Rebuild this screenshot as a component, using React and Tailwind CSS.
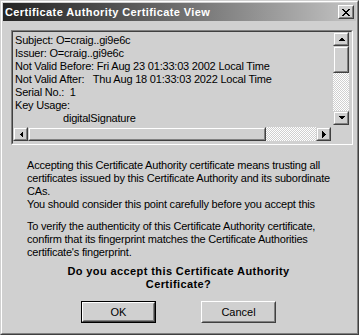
import React from "react";

const FONT = { fontFamily: '"Liberation Sans", Arial, sans-serif' };

function Raised({ className = "", children }) {
  return (
    <div className={`border border-t-[#d0d0d0] border-l-[#d0d0d0] border-b-[#404040] border-r-[#404040] ${className}`}>
      <div className="h-full w-full border border-t-white border-l-white border-b-[#808080] border-r-[#808080] bg-[#d0d0d0] flex items-center justify-center">
        {children}
      </div>
    </div>
  );
}

function Arrow({ dir }) {
  const pts = {
    up: "0,4 7,4 3.5,0.5",
    down: "0,0 7,0 3.5,3.5",
    left: "4,0 4,7 0.5,3.5",
    right: "0,0 0,7 3.5,3.5",
  }[dir];
  const vertical = dir === "up" || dir === "down";
  return (
    <svg width={vertical ? 7 : 4} height={vertical ? 4 : 7} viewBox={vertical ? "0 0 7 4" : "0 0 4 7"} shapeRendering="crispEdges">
      <polygon points={pts} fill="#000" />
    </svg>
  );
}

function CloseGlyph() {
  const rows = [
    "XX....XX",
    ".XX..XX.",
    "..XXXX..",
    "...XX...",
    "..XXXX..",
    ".XX..XX.",
    "XX....XX",
  ];
  const rects = [];
  rows.forEach((r, y) =>
    r.split("").forEach((c, x) => {
      if (c === "X") rects.push(<rect key={`${x}-${y}`} x={x} y={y} width="1" height="1" fill="#000" />);
    })
  );
  return (
    <svg width="8" height="7" viewBox="0 0 8 7" shapeRendering="crispEdges">
      {rects}
    </svg>
  );
}

const checker =
  "bg-[repeating-conic-gradient(#ffffff_0%_25%,#d0d0d0_0%_50%)] bg-[length:2px_2px]";

export default function App() {
  const lines = [
    "Subject: O=craig..gi9e6c",
    "Issuer: O=craig..gi9e6c",
    "Not Valid Before: Fri Aug 23 01:33:03 2002 Local Time",
    "Not Valid After:   Thu Aug 18 01:33:03 2022 Local Time",
    "Serial No.:  1",
    "Key Usage:",
  ];
  return (
    <div style={FONT} className="w-[359px] h-[335px] bg-[#d0d0d0] border border-t-[#d0d0d0] border-l-[#d0d0d0] border-b-[#404040] border-r-[#404040] text-black">
      <div className="h-full border border-t-white border-l-white border-b-[#808080] border-r-[#808080] p-px flex flex-col">
        {/* Title bar */}
        <div className="h-[18px] flex items-center justify-between pl-[2px] pr-[2px] bg-gradient-to-r from-[#242424] to-[#c4c4c4]">
          <span className="text-white font-bold text-[11px] tracking-[0.4px] leading-none">
            Certificate Authority Certificate View
          </span>
          <div className="w-[16px] h-[14px] border border-t-white border-l-white border-b-[#404040] border-r-[#404040] bg-[#d0d0d0]">
            <div className="h-full w-full border border-t-[#d0d0d0] border-l-[#d0d0d0] border-b-[#808080] border-r-[#808080] flex items-center justify-center">
              <CloseGlyph />
            </div>
          </div>
        </div>

        {/* Text box */}
        <div className="mt-[9px] ml-[8px] w-[342px] h-[115px] border border-t-[#808080] border-l-[#808080] border-b-white border-r-white">
          <div className="h-full w-full border border-t-[#404040] border-l-[#404040] border-b-[#d0d0d0] border-r-[#d0d0d0] grid grid-cols-[318px_16px] grid-rows-[93px_14px] gap-[2px]">
            <div className="overflow-hidden pl-[2px] pt-[2px] text-[11px] tracking-[-0.2px] leading-[13px] whitespace-pre">
              {lines.map((l) => (
                <div key={l}>{l}</div>
              ))}
              <div className="pl-[48px]">digitalSignature</div>
            </div>
            {/* vertical scrollbar */}
            <div className="flex flex-col">
              <Raised className="h-[14px]">
                <Arrow dir="up" />
              </Raised>
              <Raised className="h-[27px]" />
              <div className={`flex-1 ${checker}`} />
              <Raised className="h-[14px]">
                <Arrow dir="down" />
              </Raised>
            </div>
            {/* horizontal scrollbar */}
            <div className="flex">
              <Raised className="w-[15px]">
                <Arrow dir="left" />
              </Raised>
              <Raised className="w-[238px]" />
              <div className={`flex-1 ${checker}`} />
              <Raised className="w-[15px]">
                <Arrow dir="right" />
              </Raised>
            </div>
            <div />
          </div>
        </div>

        {/* Paragraphs */}
        <div className="ml-[24px] mt-[14px] text-[11px] tracking-[-0.2px] leading-[13px] whitespace-nowrap">
          <p>
            Accepting this Certificate Authority certificate means trusting all
            <br />
            certificates issued by this Certificate Authority and its subordinate
            <br />
            CAs.
            <br />
            You should consider this point carefully before you accept this
          </p>
          <p className="mt-[9px]">
            To verify the authenticity of this Certificate Authority certificate,
            <br />
            confirm that its fingerprint matches the Certificate Authorities
            <br />
            certificate's fingerprint.
          </p>
        </div>

        <div className="mt-[6px] text-center font-bold text-[11px] tracking-[0.4px] leading-[13px] pr-[2px]">
          Do you accept this Certificate Authority
          <br />
          Certificate?
        </div>

        <div className="mt-[10px] flex justify-center gap-[45px] pr-[2px]">
          <div className="w-[75px] h-[22px] border border-black">
            <div className="h-full w-full border border-t-white border-l-white border-b-[#404040] border-r-[#404040]">
              <div className="h-full w-full border border-t-[#d0d0d0] border-l-[#d0d0d0] border-b-[#808080] border-r-[#808080] flex items-center justify-center text-[11px]">
                OK
              </div>
            </div>
          </div>
          <div className="w-[75px] h-[22px] border border-t-white border-l-white border-b-[#404040] border-r-[#404040]">
            <div className="h-full w-full border border-t-[#d0d0d0] border-l-[#d0d0d0] border-b-[#808080] border-r-[#808080] flex items-center justify-center text-[11px]">
              Cancel
            </div>
          </div>
        </div>
      </div>
    </div>
  );
}
